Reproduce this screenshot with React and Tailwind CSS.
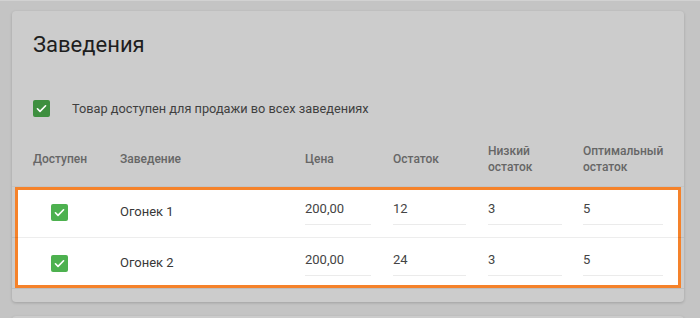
import React from "react";

function Check({ dim }) {
  return (
    <div
      className={
        "w-[17px] h-[17px] rounded-[2px] flex items-center justify-center " +
        (dim ? "bg-[#3e8f3f]" : "bg-[#4db14f]")
      }
    >
      <svg width="13" height="13" viewBox="0 0 24 24" fill="none">
        <path d="M4.5 12.5l4.8 4.8L19.5 7" stroke="white" strokeWidth="3" strokeLinecap="round" strokeLinejoin="round" />
      </svg>
    </div>
  );
}

function Field({ value, w }) {
  return (
    <div className={"h-[25px] border-b border-[#ebebeb] text-[13px] leading-[17px] text-[#444] " + w}>{value}</div>
  );
}

const rows = [
  { name: "Огонек 1", price: "200,00", stock: "12", low: "3", opt: "5" },
  { name: "Огонек 2", price: "200,00", stock: "24", low: "3", opt: "5" },
];

export default function App() {
  return (
    <div className="w-[700px] h-[318px] bg-[#c4c4c4] overflow-hidden font-['Roboto',sans-serif]">
      <div className="h-px bg-[#d2d2d2]" />
      <div className="mt-[10px] ml-[12px] w-[672px] h-[291px] rounded-[4px] bg-[#cccccc] shadow-[0_1px_3px_rgba(0,0,0,0.18)]">
        <div className="pt-[20px] px-[21px] text-[22px] leading-[28px] text-[#1e1e1e]">Заведения</div>
        <div className="mt-[41px] px-[21px] flex items-center gap-[22px]">
          <Check dim />
          <span className="text-[12.75px] leading-[17px] text-[#3f3f3f]">Товар доступен для продажи во всех заведениях</span>
        </div>
        <div className="mt-[20px] h-[50px] pb-[5px] pl-[21px] grid grid-cols-[87px_185px_88px_95px_95px_1fr] items-center border-b border-[#c4c4c4] text-[12px] leading-[16px] font-medium text-[#666666]">
          <div>Доступен</div>
          <div>Заведение</div>
          <div>Цена</div>
          <div>Остаток</div>
          <div>Низкий<br />остаток</div>
          <div>Оптимальный<br />остаток</div>
        </div>
        <div className="relative">
          <div className="absolute left-[3px] right-[3px] top-0 bottom-px border-[3px] border-[#f5822a] bg-white" />
          {rows.map((r) => (
            <div
              key={r.name}
              className="relative h-[51px] pl-[21px] grid grid-cols-[87px_185px_88px_95px_95px_1fr] items-center border-b border-[rgba(0,0,0,0.07)]"
            >
              <div className="pl-[18px]">
                <Check />
              </div>
              <div className="pb-[2px] text-[13px] leading-[17px] text-[#383838]">{r.name}</div>
              <Field value={r.price} w="w-[66px]" />
              <Field value={r.stock} w="w-[73px]" />
              <Field value={r.low} w="w-[74px]" />
              <Field value={r.opt} w="w-[80px]" />
            </div>
          ))}
        </div>
      </div>
      <div className="mt-[14px] ml-[12px] w-[672px] h-[20px] rounded-[4px] bg-[#cccccc] shadow-[0_1px_3px_rgba(0,0,0,0.18)]" />
    </div>
  );
}
